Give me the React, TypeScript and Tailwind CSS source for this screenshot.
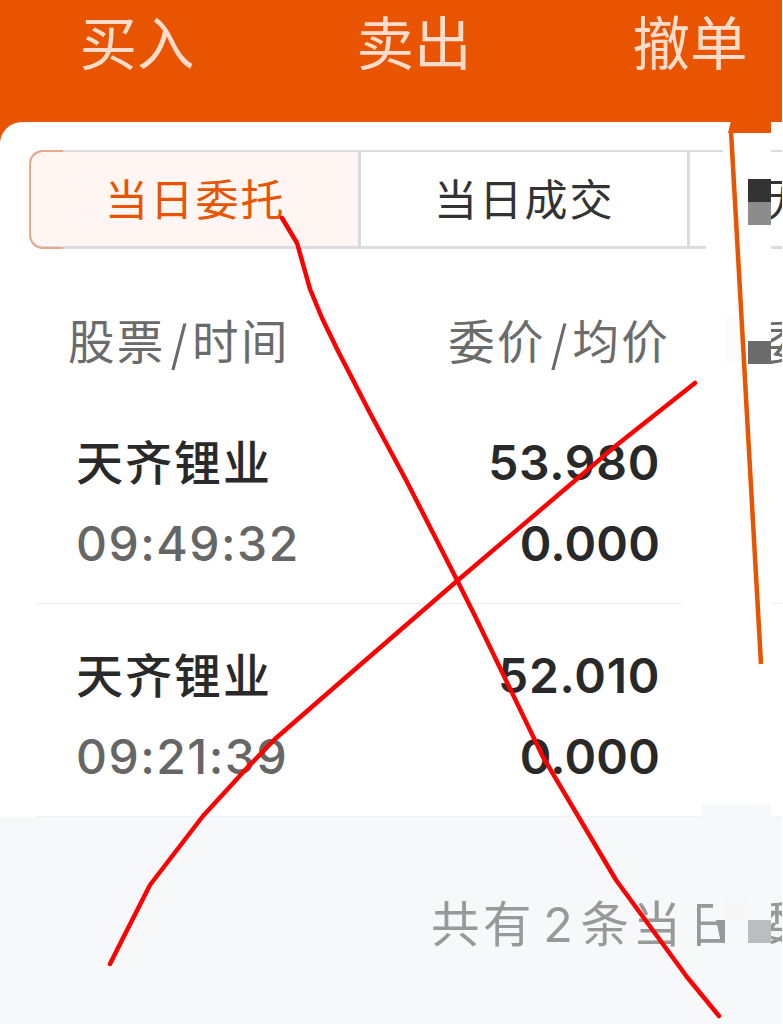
const navItems = [
  { label: "买入", className: "w-[274px]" },
  { label: "卖出", className: "w-[280px]" },
  { label: "撤单", className: "w-[272px]" },
];

const orders = [
  { name: "天齐锂业", time: "09:49:32", price: "53.980", avg: "0.000" },
  { name: "天齐锂业", time: "09:21:39", price: "52.010", avg: "0.000" },
];

function Header() {
  return (
    <header className="flex h-[142px] bg-[#e95400] pt-[14px] text-[57.5px] leading-[60px] text-[#fddccb]">
      {navItems.map((item) => (
        <div key={item.label} className={`shrink-0 text-center ${item.className}`}>
          {item.label}
        </div>
      ))}
    </header>
  );
}

function Tabs() {
  return (
    <div className="ml-[29px] mt-7 flex h-[99px] overflow-hidden text-[43px] leading-[94px] tracking-[2.2px]">
      <div className="relative w-[329px] shrink-0 rounded-l-[14px] border-y-2 border-l-2 border-[#d9dbe0] border-b-[3px] bg-[#fff5f2] pl-[74px] pt-px text-[#e95400]">
        当日委托
        {/* Rounded orange edge of the active tab */}
        <span className="absolute -left-0.5 -top-0.5 h-[99px] w-[34px] rounded-l-[14px] border-y-2 border-l-2 border-[#e8a88c]" />
      </div>
      <div className="w-[332px] shrink-0 border-x-[3px] border-b-[3px] border-t-2 border-[#d9dbe0] pl-[73px] pt-px text-[#333]">
        当日成交
      </div>
      <div className="grow overflow-hidden whitespace-nowrap border-b-[3px] border-t-2 border-[#d9dbe0] pl-[70px] pt-px text-[#333]">
        历史委托
      </div>
    </div>
  );
}

function Slash() {
  return (
    <span className="ml-[5px] mr-[3px] inline-block translate-y-0.5 scale-x-110 scale-y-115 font-light">/</span>
  );
}

function OrderRow({ order }: { order: (typeof orders)[number] }) {
  return (
    <div className="ml-9 flex h-[213px] justify-between border-b border-[#f0f0f2] pl-10 pr-[123px] pt-[42px] text-[48px] font-medium leading-[60px] text-[#292929]">
      <div>
        <div className="text-[47px] tracking-[2px]">{order.name}</div>
        <div className="mt-[21px] tracking-[1.5px] text-[#666]">{order.time}</div>
      </div>
      <div className="text-right font-semibold tracking-[0.7px]">
        <div>{order.price}</div>
        <div className="mt-[21px] tracking-[0.2px]">{order.avg}</div>
      </div>
    </div>
  );
}

// Pen strokes, erased areas and mosaic blocks drawn on top of the page
function Markup() {
  return (
    <svg className="pointer-events-none absolute inset-0" width="783" height="1024" viewBox="0 0 783 1024" fill="none">
      <g fill="#fff">
        <rect x="723" y="133" width="48" height="671" />
        <rect x="706" y="160" width="65" height="90" />
        <rect x="682" y="600" width="89" height="6" />
      </g>
      <path d="M731 121H771V133H728Z" fill="#e95400" />
      <rect x="702" y="804" width="69" height="18" fill="#f7f8fa" />
      <rect x="725" y="317" width="23" height="46" fill="#fcfcfc" />
      <rect x="748" y="179" width="23" height="23" fill="#333" />
      <rect x="748" y="202" width="23" height="23" fill="#8c8c8c" />
      <rect x="748" y="341" width="23" height="23" fill="#6b6b6b" />
      <rect x="713" y="896" width="58" height="24" fill="#f7f8fa" />
      <rect x="725" y="896" width="46" height="56" fill="#f7f8fa" />
      <rect x="725" y="898" width="23" height="22" fill="#f7f7f8" />
      <path d="M716 920H725V943H721Z" fill="#999" />
      <rect x="748" y="920" width="23" height="23" fill="#bcbdbe" />
      <path d="M731 131L761 664" stroke="#e95400" strokeWidth="4.5" />
      <g stroke="#f00" strokeWidth="4.5" strokeLinecap="round" strokeLinejoin="round">
        <path d="M282 218L297 243L310 289L322 318L338 351L370 413L406 480L457 580L475 616L543 757L616 880L687 977L719 1016" />
        <path d="M695 383L618 444L457 581L360 665L275 739L247 768L203 816L150 885L119 946L110 964" />
      </g>
      <path d="M782.5 0V1024" stroke="#fff" />
    </svg>
  );
}

export default function App() {
  return (
    <div className="relative h-[1024px] w-[783px] overflow-hidden bg-[#f7f8fa] font-['Inter','Noto_Sans_CJK_SC',sans-serif]">
      <Header />
      <main className="relative -mt-5 flow-root rounded-tl-[22px] bg-white">
        <Tabs />
        <div className="flex h-[142px] justify-between pl-[68px] pr-[113px] pt-[63px] text-[46.5px] leading-[60px] tracking-[2.3px] text-[#6b6b6b]">
          <div>
            股票
            <Slash />
            时间
          </div>
          <div className="relative">
            委价
            <Slash />
            均价
            <span className="absolute left-[316px] top-0">委</span>
          </div>
        </div>
        {orders.map((order) => (
          <OrderRow key={order.time} order={order} />
        ))}
      </main>
      <footer className="overflow-hidden whitespace-nowrap pl-[431px] pt-[78px] text-[48.5px] leading-[60px] tracking-[3.6px] text-[#999]">
        共有<span className="ml-2 mr-1">2</span>条当<span className="ml-1 mr-3">日</span>委托
      </footer>
      <Markup />
    </div>
  );
}
